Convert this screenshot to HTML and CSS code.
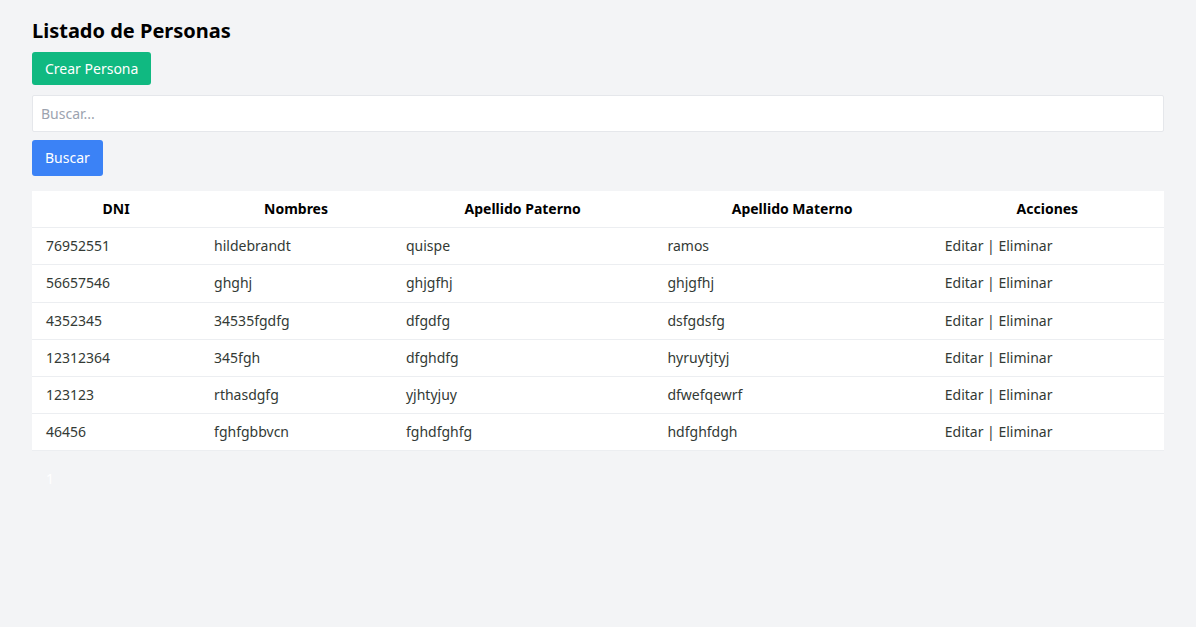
FILE: index.html
```html
<!DOCTYPE html>
<html lang="es">
<head>
<meta charset="utf-8">
<title>Listado de Personas</title>
<link rel="stylesheet" href="styles.css">
</head>
<body>
<div class="page">
  <h1 class="title">Listado de Personas</h1>
  <button class="btn btn-green">Crear Persona</button>
  <input class="search" type="text" placeholder="Buscar...">
  <button class="btn btn-blue">Buscar</button>
  <table class="table">
    <thead>
      <tr>
        <th class="c1">DNI</th>
        <th class="c2">Nombres</th>
        <th class="c3">Apellido Paterno</th>
        <th class="c4">Apellido Materno</th>
        <th class="c5">Acciones</th>
      </tr>
    </thead>
    <tbody>
      <tr><td>76952551</td><td>hildebrandt</td><td>quispe</td><td>ramos</td><td>Editar | Eliminar</td></tr>
      <tr><td>56657546</td><td>ghghj</td><td>ghjgfhj</td><td>ghjgfhj</td><td>Editar | Eliminar</td></tr>
      <tr><td>4352345</td><td>34535fgdfg</td><td>dfgdfg</td><td>dsfgdsfg</td><td>Editar | Eliminar</td></tr>
      <tr><td>12312364</td><td>345fgh</td><td>dfghdfg</td><td>hyruytjtyj</td><td>Editar | Eliminar</td></tr>
      <tr><td>123123</td><td>rthasdgfg</td><td>yjhtyjuy</td><td>dfwefqewrf</td><td>Editar | Eliminar</td></tr>
      <tr><td>46456</td><td>fghfgbbvcn</td><td>fghdfghfg</td><td>hdfghfdgh</td><td>Editar | Eliminar</td></tr>
    </tbody>
  </table>
  <div class="pagination"><button class="page-btn">1</button></div>
</div>
</body>
</html>
```

FILE: styles.css
```css
* { box-sizing: border-box; }
html, body {
  margin: 0;
  padding: 0;
  background: #f3f4f6;
  font-family: "Noto Sans", "Open Sans", sans-serif;
  font-size: 14px;
  color: #000;
}
.page {
  display: flex;
  flex-direction: column;
  align-items: flex-start;
  padding: 17px 32px 32px;
}
.title {
  margin: 0 0 7px;
  font-size: 20px;
  line-height: 28px;
  font-weight: 700;
  color: #000;
}
.btn {
  border: none;
  border-radius: 3px;
  color: #fff;
  font-family: inherit;
  font-size: 14px;
  line-height: 19px;
  cursor: pointer;
}
.btn-green {
  background: #10b981;
  padding: 7px 13px;
  margin-bottom: 10px;
}
.btn-blue {
  background: #3b82f6;
  padding: 8px 13px 9px;
  margin-bottom: 15px;
}
.search {
  width: 100%;
  height: 37px;
  border: 1px solid #e5e7eb;
  border-radius: 2px;
  background: #fff;
  padding: 0 8px;
  font-family: inherit;
  font-size: 14px;
  margin-bottom: 8px;
  outline: none;
}
.search::placeholder { color: #9ca3af; }
.table {
  width: 100%;
  border-collapse: collapse;
  background: #fff;
}
.table th, .table td {
  padding: 8px 14px;
  line-height: 20.2px;
  border-bottom: 1px solid #eceef1;
  font-size: 14px;
}
.table th {
  font-weight: 700;
  text-align: center;
  color: #000;
}
.table td {
  text-align: left;
  color: #333a35;
}
.c1 { width: 14.85%; }
.c2 { width: 16.95%; }
.c3 { width: 23.1%; }
.c4 { width: 24.5%; }
.c5 { width: 20.6%; }
.pagination {
  display: flex;
  gap: 4px;
  margin-top: 16px;
}
.page-btn {
  background: transparent;
  border: none;
  color: #fff;
  font-family: inherit;
  font-size: 14px;
  line-height: 20px;
  padding: 2px 14px;
}
```
